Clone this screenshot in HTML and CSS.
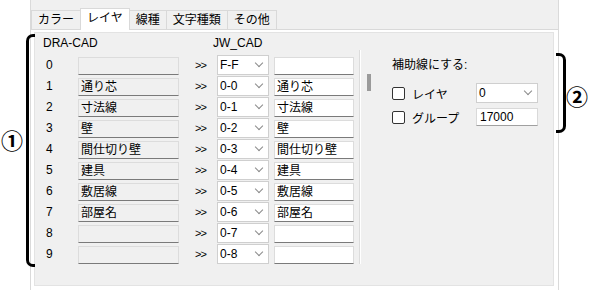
FILE: index.html
```html
<!doctype html>
<html lang="ja">
<head>
    <meta charset="UTF-8">
    <title>レイヤ変換</title>
    <link rel="stylesheet" href="styles.css">
</head>
<body>

<div class="dialog">
    <div class="tabs">
        <div class="tab">カラー</div>
        <div class="tab active">レイヤ</div>
        <div class="tab">線種</div>
        <div class="tab">文字種類</div>
        <div class="tab">その他</div>
    </div>

    <div class="panel">
        <div class="sheet">
            <div class="map">
                <div class="map-head">
                    <span>DRA-CAD</span>
                    <span>JW_CAD</span>
                </div>

                <div class="row"><span class="idx">0</span><span class="src"></span><span class="arrow">&gt;&gt;</span><span class="combo">F-F</span><span class="dst"></span></div>
                <div class="row"><span class="idx">1</span><span class="src">通り芯</span><span class="arrow">&gt;&gt;</span><span class="combo">0-0</span><span class="dst">通り芯</span></div>
                <div class="row"><span class="idx">2</span><span class="src">寸法線</span><span class="arrow">&gt;&gt;</span><span class="combo">0-1</span><span class="dst">寸法線</span></div>
                <div class="row"><span class="idx">3</span><span class="src">壁</span><span class="arrow">&gt;&gt;</span><span class="combo">0-2</span><span class="dst">壁</span></div>
                <div class="row"><span class="idx">4</span><span class="src">間仕切り壁</span><span class="arrow">&gt;&gt;</span><span class="combo">0-3</span><span class="dst">間仕切り壁</span></div>
                <div class="row"><span class="idx">5</span><span class="src">建具</span><span class="arrow">&gt;&gt;</span><span class="combo">0-4</span><span class="dst">建具</span></div>
                <div class="row"><span class="idx">6</span><span class="src">敷居線</span><span class="arrow">&gt;&gt;</span><span class="combo">0-5</span><span class="dst">敷居線</span></div>
                <div class="row"><span class="idx">7</span><span class="src">部屋名</span><span class="arrow">&gt;&gt;</span><span class="combo">0-6</span><span class="dst">部屋名</span></div>
                <div class="row"><span class="idx">8</span><span class="src"></span><span class="arrow">&gt;&gt;</span><span class="combo">0-7</span><span class="dst"></span></div>
                <div class="row"><span class="idx">9</span><span class="src"></span><span class="arrow">&gt;&gt;</span><span class="combo">0-8</span><span class="dst"></span></div>
            </div>

            <div class="sep"></div>
            <div class="thumb"></div>

            <div class="aux">
                <div class="aux-title">補助線にする:</div>
                <div class="opt opt-layer">
                    <label class="check"><span class="box"></span>レイヤ</label>
                    <span class="combo">0</span>
                </div>
                <div class="opt opt-group">
                    <label class="check"><span class="box"></span>グループ</label>
                    <span class="field">17000</span>
                </div>
            </div>
        </div>
    </div>
</div>

<!-- annotations -->
<div class="brace brace-l"></div>
<div class="mark mark-1">①</div>
<div class="brace brace-r"></div>
<div class="mark mark-2">②</div>

</body>
</html>
```

FILE: styles.css
```css
* {
    box-sizing: border-box;
}

body {
    margin: 0;
    width: 590px;
    height: 290px;
    overflow: hidden;
    position: relative;
    background: #fff;
    color: #000;
    font-family: "Liberation Sans", "Noto Sans CJK JP", sans-serif;
    font-size: 12px;
}

.dialog {
    margin-left: 30px;
    width: 529px;
    height: 290px;
    background: #f0f0f0;
    border-left: 1px solid #dadada;
    border-right: 1px solid #dadada;
    padding-top: 8px;
    display: flex;
    flex-direction: column;
}

.tabs {
    display: flex;
    align-items: flex-end;
    height: 21px;
    position: relative;
    z-index: 1;
}

.tab {
    height: 19px;
    padding: 0 6px;
    margin-right: -1px;
    border: 1px solid #d9d9d9;
    border-bottom: none;
    background: #f0f0f0;
    line-height: 19px;
}

.tab.active {
    height: 22px;
    margin-bottom: -1px;
    background: #fff;
    line-height: 18px;
    position: relative;
}

.panel {
    flex: 1;
    display: flex;
    border-top: 1px solid #d9d9d9;
    background: #fff;
    padding: 2px 4px 4px 3px;
}

.sheet {
    flex: 1;
    display: flex;
    align-items: flex-start;
    background: #f0f0f0;
    border: 1px solid #e3e3e3;
}

.map {
    padding-left: 8px;
}

.map-head {
    display: grid;
    grid-template-columns: 170px 141px;
    height: 16px;
    line-height: 16px;
    margin: 2px 0 4px;
}

.row {
    display: grid;
    grid-template-columns: 35px 101px 38px 52px 85px;
    align-items: end;
    height: 20px;
    margin-bottom: 1px;
}

.idx {
    align-self: center;
    padding-left: 3px;
}

.src,
.dst {
    height: 18px;
    line-height: 16px;
    padding-left: 2px;
    border: 1px solid #dcdcdc;
    border-bottom-color: #7a7a7a;
    white-space: nowrap;
}

.src {
    background: #f0f0f0;
}

.dst {
    justify-self: end;
    width: 80px;
    background: #fff;
}

.arrow {
    align-self: center;
    padding-left: 16px;
    font-size: 11px;
    letter-spacing: -1px;
}

.combo {
    height: 20px;
    display: flex;
    align-items: center;
    justify-content: space-between;
    padding: 0 6px 0 2px;
    background: #fff;
    border: 1px solid #cfcfcf;
}

.combo::after {
    content: "";
    width: 5px;
    height: 5px;
    margin-top: -4px;
    border-right: 1px solid #8a8a8a;
    border-bottom: 1px solid #8a8a8a;
    transform: rotate(45deg);
}

.sep {
    margin: 17px 0 0 5px;
    width: 2px;
    height: 214px;
    border-left: 1px solid #dcdcdc;
    border-right: 1px solid #fff;
}

.thumb {
    margin: 41px 0 0 6px;
    width: 4px;
    height: 17px;
    background: #9a9a9a;
}

.aux {
    margin-left: 21px;
    padding-top: 24px;
}

.aux-title {
    line-height: 16px;
}

.opt {
    display: grid;
    grid-template-columns: 84px 62px;
    align-items: center;
}

.opt-layer {
    margin-top: 10px;
    height: 20px;
}

.opt-group {
    margin-top: 5px;
    height: 18px;
}

.check {
    display: flex;
    align-items: center;
    gap: 7px;
}

.box {
    width: 13px;
    height: 13px;
    border: 1px solid #333;
    border-radius: 2px;
    background: #fff;
}

.field {
    height: 18px;
    line-height: 16px;
    padding-left: 3px;
    background: #fff;
    border: 1px solid #d9d9d9;
    border-bottom-color: #a0a0a0;
}

/* annotation brackets drawn over the dialog */
.brace {
    position: absolute;
    border: 3px solid #000;
}

.brace-l {
    left: 26px;
    top: 34px;
    width: 9px;
    height: 233px;
    border-right: none;
    border-radius: 7px 0 0 7px;
}

.brace-r {
    left: 556px;
    top: 53px;
    width: 10px;
    height: 80px;
    border-left: none;
    border-radius: 0 7px 7px 0;
}

.mark {
    position: absolute;
    font-family: "Noto Sans CJK JP", sans-serif;
    font-size: 22px;
    font-weight: bold;
    line-height: 24px;
}

.mark-1 {
    left: 1px;
    top: 127px;
}

.mark-2 {
    left: 566px;
    top: 83px;
}
```
